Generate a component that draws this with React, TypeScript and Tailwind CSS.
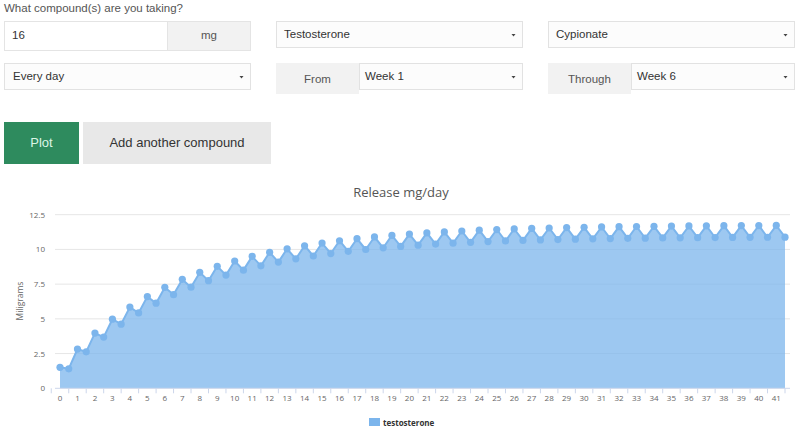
import React from 'react';

const S = 11.76;
const K = 0.8716;

const points: { t: number; v: number }[] = [];
for (let n = 0; n <= 41; n++) {
  const peak = S * (1 - Math.pow(K, n + 1));
  points.push({ t: n, v: peak });
  points.push({ t: n + 0.5, v: peak * 0.928 });
}

const X0 = 60;
const XU = 17.47;
const Y0 = 388.3;
const YU = 13.89;
const px = (t: number) => X0 + t * XU;
const py = (v: number) => Y0 - v * YU;

const Caret = () => (
  <svg width="5" height="4" viewBox="0 0 5 4" className="shrink-0">
    <path d="M0.5 1 L4.5 1 L2.5 3.5 Z" fill="#444" />
  </svg>
);

const Select = ({ label, className = '' }: { label: string; className?: string }) => (
  <div
    className={`flex h-[27px] items-center justify-between border border-[#e2e2e2] bg-[#fcfcfc] pl-[7px] pr-[6px] text-[11.5px] text-[#333] ${className}`}
  >
    <span>{label}</span>
    <Caret />
  </div>
);

const Addon = ({ label, className = '' }: { label: string; className?: string }) => (
  <div
    className={`flex h-[31px] shrink-0 items-center justify-center bg-[#f2f2f2] pt-[2px] text-[11.5px] text-[#555] ${className}`}
  >
    {label}
  </div>
);

const Chart = () => {
  const line = points.map((p, i) => `${i === 0 ? 'M' : 'L'}${px(p.t).toFixed(1)} ${py(p.v).toFixed(1)}`).join(' ');
  const last = points[points.length - 1];
  const area = `${line} L${px(last.t).toFixed(1)} ${Y0} L${px(0)} ${Y0} Z`;
  const yTicks = [0, 2.5, 5, 7.5, 10, 12.5];

  return (
    <svg width="800" height="265" viewBox="0 164 800 265" className="block font-['Open_Sans',sans-serif]">
      <text x="401" y="197" textAnchor="middle" fontSize="13" fill="#555">
        Release mg/day
      </text>

      {yTicks.map((v) => (
        <g key={v}>
          {v > 0 && <line x1="55" x2="790" y1={py(v)} y2={py(v)} stroke="#e6e6e6" strokeWidth="1" />}
          <text x="45" y={py(v) + 3} textAnchor="end" fontSize="8" fill="#666">
            {v}
          </text>
        </g>
      ))}

      <text
        x="23"
        y="301"
        textAnchor="middle"
        fontSize="8.5"
        fill="#666"
        transform="rotate(-90 23 301)"
      >
        Miligrams
      </text>

      <path d={area} fill="#7cb5ec" fillOpacity="0.75" />
      <path d={line} fill="none" stroke="#7cb5ec" strokeWidth="2" strokeLinejoin="round" />
      {points.map((p, i) => (
        <circle key={i} cx={px(p.t)} cy={py(p.v)} r="3.6" fill="#7cb5ec" />
      ))}

      <line x1="55" x2="790" y1={Y0} y2={Y0} stroke="#ccd6eb" strokeWidth="1" />
      {Array.from({ length: 43 }, (_, i) => (
        <line key={i} x1={px(i - 0.5)} x2={px(i - 0.5)} y1={Y0} y2={Y0 + 5} stroke="#ccd6eb" strokeWidth="1" />
      ))}
      {Array.from({ length: 42 }, (_, i) => (
        <text key={i} x={px(i)} y="401" textAnchor="middle" fontSize="8" fill="#666">
          {i}
        </text>
      ))}

      <rect x="369" y="418" width="11" height="8" fill="#7cb5ec" />
      <text x="383" y="425.5" fontSize="8" fontWeight="bold" fill="#333">
        testosterone
      </text>
    </svg>
  );
};

export default function App() {
  return (
    <div className="h-[429px] w-[800px] overflow-hidden bg-white font-['Liberation_Sans',Arial,sans-serif] text-[#333]">
      <div className="pl-[4px] pr-[5px]">
        <div className="pt-[1px] text-[11.5px] leading-[14px] text-[#555]">What compound(s) are you taking?</div>

        <div className="mt-[6px] grid grid-cols-3 items-start gap-x-[25px] gap-y-[12px]">
          <div className="flex h-[30px]">
            <div className="flex flex-1 items-center border border-[#e4e4e4] bg-white pl-[7px] text-[11.5px] text-[#333]">
              16
            </div>
            <Addon label="mg" className="!h-[30px] w-[83px] border border-l-0 border-[#e4e4e4] !pt-0" />
          </div>
          <Select label="Testosterone" />
          <Select label="Cypionate" />

          <Select label="Every day" className="!pl-[8px]" />
          <div className="flex items-start">
            <Addon label="From" className="w-[83px]" />
            <Select label="Week 1" className="flex-1 !pl-[5px]" />
          </div>
          <div className="flex items-start">
            <Addon label="Through" className="w-[83px]" />
            <Select label="Week 6" className="flex-1 !pl-[5px]" />
          </div>
        </div>

        <div className="mt-[28px] flex gap-[4px]">
          <button className="h-[42px] w-[75px] bg-[#2e8b5e] text-[13px] text-[#dcf5e6]">Plot</button>
          <button className="h-[42px] w-[188px] bg-[#e8e8e8] text-[13px] text-[#333]">Add another compound</button>
        </div>
      </div>

      <Chart />
    </div>
  );
}
